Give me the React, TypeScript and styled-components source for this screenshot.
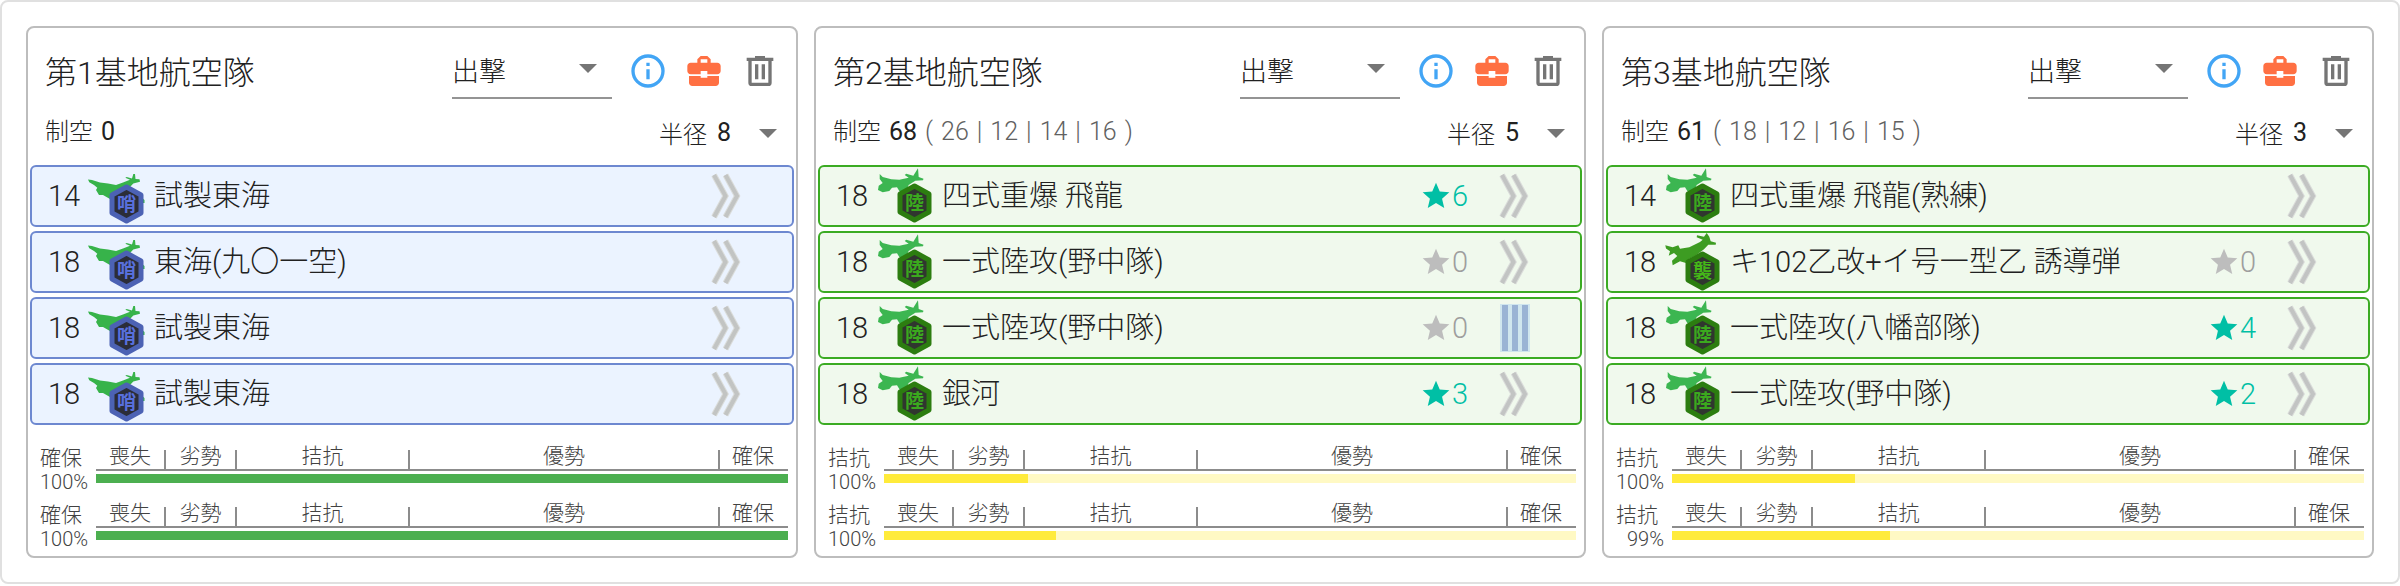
import React from 'react';
import styled, { createGlobalStyle, css } from 'styled-components';

type Kind = 'patrol' | 'land' | 'assault';

interface Plane {
  slots: number;
  kind: Kind;
  name: string;
  stars?: number;
  basic?: boolean;
}

interface Battle {
  state: string;
  rate: string;
  fill: number;
}

interface Base {
  no: number;
  power: number;
  waves?: number[];
  radius: number;
  planes: Plane[];
  battles: Battle[];
}

const bases: Base[] = [
  {
    no: 1,
    power: 0,
    radius: 8,
    planes: [
      { slots: 14, kind: 'patrol', name: '試製東海' },
      { slots: 18, kind: 'patrol', name: '東海(九〇一空)' },
      { slots: 18, kind: 'patrol', name: '試製東海' },
      { slots: 18, kind: 'patrol', name: '試製東海' },
    ],
    battles: [
      { state: '確保', rate: '100%', fill: 100 },
      { state: '確保', rate: '100%', fill: 100 },
    ],
  },
  {
    no: 2,
    power: 68,
    waves: [26, 12, 14, 16],
    radius: 5,
    planes: [
      { slots: 18, kind: 'land', name: '四式重爆 飛龍', stars: 6 },
      { slots: 18, kind: 'land', name: '一式陸攻(野中隊)', stars: 0 },
      { slots: 18, kind: 'land', name: '一式陸攻(野中隊)', stars: 0, basic: true },
      { slots: 18, kind: 'land', name: '銀河', stars: 3 },
    ],
    battles: [
      { state: '拮抗', rate: '100%', fill: 20.8 },
      { state: '拮抗', rate: '100%', fill: 24.9 },
    ],
  },
  {
    no: 3,
    power: 61,
    waves: [18, 12, 16, 15],
    radius: 3,
    planes: [
      { slots: 14, kind: 'land', name: '四式重爆 飛龍(熟練)' },
      { slots: 18, kind: 'assault', name: 'キ102乙改+イ号一型乙 誘導弾', stars: 0 },
      { slots: 18, kind: 'land', name: '一式陸攻(八幡部隊)', stars: 4 },
      { slots: 18, kind: 'land', name: '一式陸攻(野中隊)', stars: 2 },
    ],
    battles: [
      { state: '拮抗', rate: '100%', fill: 26.4 },
      { state: '拮抗', rate: '99%', fill: 31.5 },
    ],
  },
];

const GlobalStyle = createGlobalStyle`
  *, *::before, *::after { box-sizing: border-box; }
  body {
    margin: 0;
    background: #fff;
    color: #212121;
    font-family: Roboto, "Noto Sans CJK JP", sans-serif;
    font-weight: 300;
  }
  button, select { font: inherit; color: inherit; }
`;

const Board = styled.main`
  display: grid;
  grid-template-columns: repeat(3, minmax(0, 1fr));
  gap: 16px;
  padding: 24px;
  border: 2px solid #e0e0e0;
  border-radius: 8px;
`;

const Panel = styled.section`
  padding: 0 2px 5px;
  border: 2px solid #bdbdbd;
  border-radius: 8px;
`;

const Header = styled.header`
  display: flex;
  align-items: center;
  height: 86px;
  padding: 0 14px 0 15px;
`;

const Title = styled.h2`
  flex: 1;
  margin: 0;
  padding-top: 4px;
  font-size: 32px;
  font-weight: 300;
  line-height: 48px;
`;

const ModeField = styled.div`
  position: relative;
  width: 160px;
  margin-right: 16px;
`;

const ModeSelect = styled.select`
  display: block;
  width: 100%;
  height: 56px;
  padding: 4px 0 0;
  border: 0;
  border-bottom: 2px solid #949494;
  background: none;
  appearance: none;
  font-size: 27px;
`;

const caret = css`
  width: 18px;
  height: 9px;
  fill: #757575;
  pointer-events: none;
`;

const ModeCaret = styled.svg`
  ${caret}
  position: absolute;
  right: 15px;
  top: 21px;
`;

const RadiusCaret = styled.svg`
  ${caret}
  position: absolute;
  right: 0;
  top: 15px;
`;

const IconButton = styled.button<{ $tint: string }>`
  width: 40px;
  height: 40px;
  margin-left: 16px;
  padding: 0;
  border: 0;
  background: none;
  color: ${(p) => p.$tint};
  cursor: pointer;

  &:first-of-type { margin-left: 0; }
  svg { display: block; width: 40px; height: 40px; fill: currentColor; }
`;

const Stats = styled.div`
  display: flex;
  align-items: center;
  justify-content: space-between;
  height: 36px;
  padding: 0 17px 0 15px;
  font-size: 24px;
`;

const Power = styled.div`
  display: flex;
  align-items: baseline;
  gap: 8px;
  line-height: 36px;
`;

const Strong = styled.span`
  font-size: 25px;
  font-weight: 400;
`;

const Wave = styled.span`
  color: #616161;
  font-size: 25px;
`;

const RadiusField = styled.div`
  position: relative;
  display: flex;
  align-items: center;
  gap: 10px;
`;

const RadiusSelect = styled.select`
  width: 60px;
  height: 36px;
  padding: 0;
  border: 0;
  background: none;
  appearance: none;
  font-size: 25px;
  font-weight: 400;
`;

const PlaneList = styled.ul`
  display: grid;
  gap: 4px;
  margin: 15px 0 20px;
  padding: 0;
  list-style: none;
`;

const PlaneRow = styled.li<{ $patrol: boolean }>`
  display: flex;
  align-items: center;
  height: 62px;
  padding-left: 16px;
  padding-right: 48px;
  border: 2px solid ${(p) => (p.$patrol ? '#6d88d0' : '#3bab23')};
  border-radius: 6px;
  background: ${(p) => (p.$patrol ? '#ebf3ff' : '#f0f9ed')};
  font-size: 29px;
`;

const Slots = styled.span`
  width: 38px;
`;

const PlaneIconBox = styled.svg`
  flex: none;
  width: 60px;
  height: 58px;
`;

const NameButton = styled.button`
  flex: 1;
  min-width: 0;
  height: 58px;
  padding: 0 0 6px 8px;
  border: 0;
  background: none;
  text-align: left;
  white-space: nowrap;
  cursor: pointer;
`;

const Stars = styled.span<{ $on: boolean }>`
  display: flex;
  align-items: center;
  margin-right: 28px;
  color: ${(p) => (p.$on ? '#00bfa5' : '#9e9e9e')};

  svg {
    width: 32px;
    height: 32px;
    fill: ${(p) => (p.$on ? '#00bfa5' : '#bdbdbd')};
  }
`;

const SkillButton = styled.button`
  width: 36px;
  height: 50px;
  padding: 0;
  border: 0;
  background: none;
  cursor: pointer;

  svg { display: block; width: 36px; height: 50px; }
`;

const Gauges = styled.div`
  display: grid;
  gap: 8px;
  padding: 0 6px 0 10px;
`;

const GaugeRow = styled.div`
  display: grid;
  grid-template-columns: 48px minmax(0, 1fr);
  column-gap: 8px;
  color: #424242;
  font-size: 21px;
`;

const GaugeLabel = styled.div`
  display: grid;
  padding-top: 1px;
  line-height: 24px;
  text-align: right;
`;

const State = styled.span`
  text-align: left;
`;

const Rate = styled.span`
  font-size: 20px;
`;

const Scale = styled.div`
  display: grid;
  grid-template-columns: 70fr 71fr 173fr 310fr 68fr;
  height: 26px;
  border-bottom: 2px solid #8c8c8c;
  line-height: 22px;
  text-align: center;
`;

const Zone = styled.span`
  position: relative;
  padding-right: 2px;

  &:not(:last-child)::after {
    content: '';
    position: absolute;
    right: 0;
    top: 5px;
    bottom: 0;
    width: 2px;
    background: #8c8c8c;
  }
`;

const Track = styled.div<{ $full: boolean }>`
  height: 9px;
  margin-top: 3px;
  background: ${(p) => (p.$full ? '#c8e6c9' : '#fff9c4')};
`;

const Fill = styled.div<{ $full: boolean }>`
  height: 100%;
  background: ${(p) => (p.$full ? '#4caf50' : '#ffeb3b')};
`;

const icons = {
  info: 'M11,9H13V7H11M12,20C7.59,20 4,16.41 4,12C4,7.59 7.59,4 12,4C16.41,4 20,7.59 20,12C20,16.41 16.41,20 12,20M12,2A10,10 0 0,0 2,12A10,10 0 0,0 12,22A10,10 0 0,0 22,12A10,10 0 0,0 12,2M11,17H13V11H11V17Z',
  briefcase:
    'M10,16V15H3V19C3,20.1 3.9,21 5,21H19C20.1,21 21,20.1 21,19V15H14V16H10M20,7H16V5L14,3H10L8,5V7H4C2.9,7 2,7.9 2,9V12C2,13.1 2.9,14 4,14H10V12H14V14H20C21.1,14 22,13.1 22,12V9C22,7.9 21.1,7 20,7M14,7H10V5H14V7Z',
  trash:
    'M9,3V4H4V6H5V19A2,2 0 0,0 7,21H17A2,2 0 0,0 19,19V6H20V4H15V3H9M7,6H17V19H7V6M9,8V17H11V8H9M13,8V17H15V8H13Z',
  star: 'M12,17.27L18.18,21L16.54,13.97L22,9.24L14.81,8.62L12,2L9.19,8.62L2,9.24L7.45,13.97L5.82,21L12,17.27Z',
};

const planeArt: Record<
  Kind,
  { body: string; bodyFill: string; cy: number; rim: string; core: string; glyph: string; glyphFill: string; label: string }
> = {
  patrol: {
    body: 'M2 12.5L6 13L14 15.5L22 16.5L30 18L37 15.5L44 12.7L39.3 10.7L40.7 10L46 11.5L47.3 7H49L49.5 12L53.5 12.3L54 14.7L47.3 16.5L44 20L58.5 33V36L50 36L24 32L17 28L13 28L10 23L11.3 20.7L8 18L3.3 15.3Z',
    bodyFill: '#37b34a',
    cy: 37,
    rim: '#4c62b4',
    core: '#2b2d38',
    glyph: '哨',
    glyphFill: '#5870dc',
    label: '対潜哨戒機',
  },
  land: {
    body: 'M5.7 7L8.7 10L17.3 12.3L25.3 12.7L34.7 10.7L30.7 8L32.3 6.7L39.3 8.7L44 1.3L44.7 10L49.5 11.7L49 13.2L41.3 13.7L34.7 18L32 24L25.3 24L23 20.3L18 20.7L15.3 24L8.7 25.3L4 23L4.7 18.7L8.7 16L5.7 12Z',
    bodyFill: '#3cb651',
    cy: 36,
    rim: '#2c7d10',
    core: '#30362f',
    glyph: '陸',
    glyphFill: '#3ba91e',
    label: '陸上攻撃機',
  },
  assault: {
    body: 'M3.3 12.3L10.7 14.3L16.3 12.3L18 15.7L27.3 14.3L38 9L40.7 6.7L34.7 4.3L35 2.3L42 3.7L44.7 0L47.3 3.7L48.7 8.3L54 9.7L53.7 11.7L46.3 11.7L42 16.3L34.7 21.7L27 26L24 30L18 28.3L10.7 32.3L10 27.7L15.3 23L12 20L6.7 22.7L8 18.3L4 15.5Z',
    bodyFill: '#3d9c22',
    cy: 38,
    rim: '#2c7d10',
    core: '#30362f',
    glyph: '襲',
    glyphFill: '#45b818',
    label: '襲撃機',
  },
};

function PlaneIcon({ kind }: { kind: Kind }) {
  const a = planeArt[kind];
  const y = a.cy;
  return (
    <PlaneIconBox viewBox="0 0 60 58" role="img" aria-label={a.label}>
      <path d={a.body} fill={a.bodyFill} />
      <path
        d={`M40.5 ${y - 17}L55 ${y - 9}V${y + 9}L40.5 ${y + 17}L26 ${y + 9}V${y - 9}Z`}
        fill={a.core}
        stroke={a.rim}
        strokeWidth="5"
        strokeLinejoin="round"
      />
      <text
        x="40.5"
        y={y + 7}
        textAnchor="middle"
        fontFamily="'Noto Sans CJK JP', sans-serif"
        fontSize="19"
        fontWeight="700"
        fill={a.glyphFill}
      >
        {a.glyph}
      </text>
    </PlaneIconBox>
  );
}

function SkillMark({ basic }: { basic?: boolean }) {
  if (basic) {
    return (
      <svg viewBox="0 0 36 50">
        <path d="M4 1H34V49H4Z" fill="#cfe6ee" />
        <path d="M6 2H12V48H6ZM16 2H22V48H16ZM26 2H32V48H26Z" fill="#99b3d4" />
      </svg>
    );
  }
  return (
    <svg viewBox="0 0 36 50">
      <path d="M6 4L17.5 25L6 46M17.5 4L29 25L17.5 46" fill="none" stroke="#dadcda" strokeWidth="6" />
      <path d="M6 4L17.5 25L6 46M17.5 4L29 25L17.5 46" fill="none" stroke="#c2c4c3" strokeWidth="4" />
    </svg>
  );
}

function Glyph({ d }: { d: string }) {
  return (
    <svg viewBox="0 0 24 24" aria-hidden="true">
      <path d={d} />
    </svg>
  );
}

const zones = ['喪失', '劣勢', '拮抗', '優勢', '確保'];

function Gauge({ state, rate, fill }: Battle) {
  const full = fill === 100;
  return (
    <GaugeRow>
      <GaugeLabel>
        <State>{state}</State>
        <Rate>{rate}</Rate>
      </GaugeLabel>
      <div>
        <Scale>
          {zones.map((z) => (
            <Zone key={z}>{z}</Zone>
          ))}
        </Scale>
        <Track $full={full} role="progressbar" aria-label={state} aria-valuenow={fill}>
          <Fill $full={full} style={{ width: `${fill}%` }} />
        </Track>
      </div>
    </GaugeRow>
  );
}

function Waves({ values }: { values: number[] }) {
  return (
    <>
      <Wave>(</Wave>
      {values.map((v, i) => (
        <React.Fragment key={i}>
          {i > 0 && <Wave>|</Wave>}
          <Wave>{v}</Wave>
        </React.Fragment>
      ))}
      <Wave>)</Wave>
    </>
  );
}

function AirBase({ base }: { base: Base }) {
  const modeId = `mode-${base.no}`;
  const radiusId = `radius-${base.no}`;
  return (
    <Panel>
      <Header>
        <Title>第{base.no}基地航空隊</Title>
        <ModeField>
          <ModeSelect id={modeId} aria-label="札" defaultValue="出撃">
            <option>出撃</option>
            <option>防空</option>
            <option>待機</option>
          </ModeSelect>
          <ModeCaret viewBox="0 0 18 9" aria-hidden="true">
            <path d="M0 0H18L9 9Z" />
          </ModeCaret>
        </ModeField>
        <IconButton $tint="#42a5f5" aria-label="詳細">
          <Glyph d={icons.info} />
        </IconButton>
        <IconButton $tint="#ff7043" aria-label="装備">
          <Glyph d={icons.briefcase} />
        </IconButton>
        <IconButton $tint="#757575" aria-label="削除">
          <Glyph d={icons.trash} />
        </IconButton>
      </Header>
      <Stats>
        <Power>
          <span>制空</span>
          <Strong>{base.power}</Strong>
          {base.waves && <Waves values={base.waves} />}
        </Power>
        <RadiusField>
          <label htmlFor={radiusId}>半径</label>
          <RadiusSelect id={radiusId} defaultValue={base.radius}>
            {[1, 2, 3, 4, 5, 6, 7, 8, 9].map((n) => (
              <option key={n}>{n}</option>
            ))}
          </RadiusSelect>
          <RadiusCaret viewBox="0 0 18 9" aria-hidden="true">
            <path d="M0 0H18L9 9Z" />
          </RadiusCaret>
        </RadiusField>
      </Stats>
      <PlaneList>
        {base.planes.map((p, i) => (
          <PlaneRow key={i} $patrol={p.kind === 'patrol'}>
            <Slots>{p.slots}</Slots>
            <PlaneIcon kind={p.kind} />
            <NameButton>{p.name}</NameButton>
            {p.stars !== undefined && (
              <Stars $on={p.stars > 0}>
                <Glyph d={icons.star} />
                {p.stars}
              </Stars>
            )}
            <SkillButton aria-label="熟練度">
              <SkillMark basic={p.basic} />
            </SkillButton>
          </PlaneRow>
        ))}
      </PlaneList>
      <Gauges>
        {base.battles.map((b, i) => (
          <Gauge key={i} {...b} />
        ))}
      </Gauges>
    </Panel>
  );
}

export default function App() {
  return (
    <>
      <GlobalStyle />
      <Board>
        {bases.map((b) => (
          <AirBase key={b.no} base={b} />
        ))}
      </Board>
    </>
  );
}
